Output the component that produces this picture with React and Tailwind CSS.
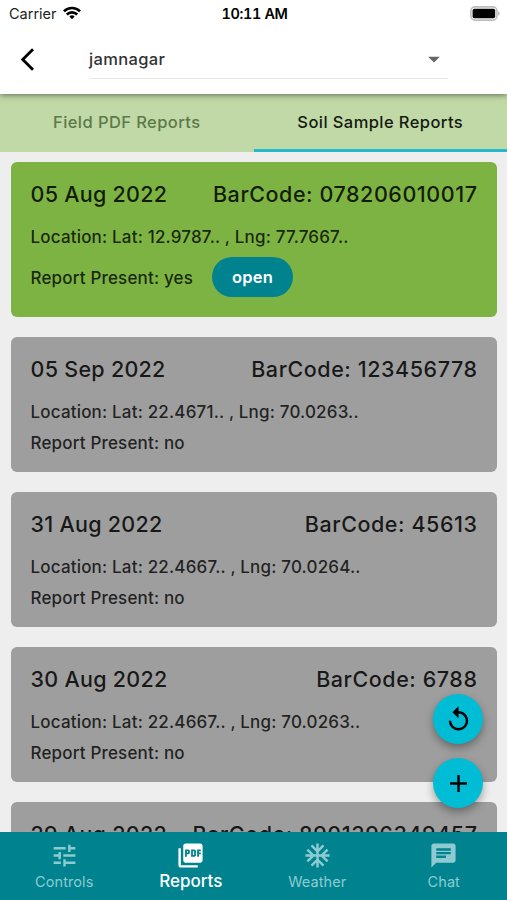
import React, { useState } from 'react';
import {
  MdAcUnit,
  MdAdd,
  MdArrowBackIosNew,
  MdArrowDropDown,
  MdChat,
  MdPictureAsPdf,
  MdReplay,
  MdTune,
} from 'react-icons/md';

const reports = [
  { date: '05 Aug 2022', barcode: '078206010017', lat: '12.9787..', lng: '77.7667..', present: true },
  { date: '05 Sep 2022', barcode: '123456778', lat: '22.4671..', lng: '70.0263..', present: false },
  { date: '31 Aug 2022', barcode: '45613', lat: '22.4667..', lng: '70.0264..', present: false },
  { date: '30 Aug 2022', barcode: '6788', lat: '22.4667..', lng: '70.0263..', present: false },
  { date: '29 Aug 2022', barcode: '8901396349457', lat: '22.4667..', lng: '70.0263..', present: false },
];

const tabs = ['Field PDF Reports', 'Soil Sample Reports'];

const navItems = [
  { label: 'Controls', icon: MdTune },
  { label: 'Reports', icon: MdPictureAsPdf },
  { label: 'Weather', icon: MdAcUnit },
  { label: 'Chat', icon: MdChat },
];

const StatusBar = () => (
  <div className="grid h-7 grid-cols-3 items-center pl-[9px] pr-[7px] text-black">
    <div className="flex items-center gap-1.5 text-[14.5px] text-[#222]">
      <span>Carrier</span>
      <svg className="-mt-0.5" width="18" height="14" viewBox="0 0 19 14" fill="none" stroke="black" strokeWidth="2.7">
        <path d="M1 5.2a12 12 0 0 1 17 0" />
        <path d="M4 8.6a7.8 7.8 0 0 1 11 0" />
        <path d="M9.5 13.6 6.7 10.8a4 4 0 0 1 5.6 0Z" fill="black" stroke="none" />
      </svg>
    </div>
    <span className="text-center text-[14.5px] font-semibold tabular-nums tracking-[-0.4px]">10:11 AM</span>
    <div className="flex justify-end">
      <svg className="-mt-0.5" width="30" height="15" viewBox="0 0 30 15">
        <rect x="0.9" y="0.9" width="26" height="13.2" rx="4" fill="white" stroke="#bdbdbd" strokeWidth="1.6" />
        <rect x="2.6" y="2.8" width="22.6" height="9.4" rx="1.8" fill="black" />
        <path d="M28.2 5.2c1.8.7 1.8 3.9 0 4.6Z" fill="#b5b5b5" />
      </svg>
    </div>
  </div>
);

const ReportCard = ({ report }) => (
  <div
    className={`shrink-0 rounded-[6px] px-5 ${
      report.present ? 'h-[155px] bg-[#7cb342]' : 'h-[135px] bg-[#9e9e9e]'
    }`}
  >
    <div className="flex justify-between pt-[17px] text-[21.5px] font-medium leading-[30px] text-black/85">
      <span className="tracking-[0.28px]">{report.date}</span>
      <span className="-mr-px tracking-[0.55px]">BarCode: {report.barcode}</span>
    </div>
    <p className="mt-4 text-[17px] font-medium leading-6 tracking-[0.18px] text-black/80">
      Location: Lat: {report.lat} , Lng: {report.lng}
    </p>
    <div
      className={`flex items-center text-[17px] font-medium tracking-[0.17px] text-black/80 ${
        report.present ? 'mt-2 h-10' : 'mt-[7px] h-6'
      }`}
    >
      <span className={report.present ? 'w-[181.5px] pt-0.5' : 'pt-px'}>
        Report Present: {report.present ? 'yes' : 'no'}
      </span>
      {report.present && (
        <button className="h-10 w-[81px] rounded-full bg-[#00838f] pt-px text-[16.5px] font-semibold text-white">
          open
        </button>
      )}
    </div>
  </div>
);

const App = () => {
  const [activeTab, setActiveTab] = useState(1);
  const [activeNav, setActiveNav] = useState(1);

  return (
    <div className="relative flex h-[900px] w-[507px] flex-col overflow-hidden bg-[#eeeeee] font-['Inter',sans-serif]">
      {/* Header */}
      <header className="z-10 h-[94px] shrink-0 bg-white shadow-[0_1px_6px_rgba(0,0,0,0.5)]">
        <StatusBar />
        <div className="flex h-[51px] pl-[14px]">
          <button className="flex h-[62px] w-[75px] items-center">
            <MdArrowBackIosNew className="size-[27px] text-black" />
          </button>
          <div className="flex w-[359px] items-center justify-between border-b border-[#e8e8e8] pt-3">
            <span className="pt-px text-[16.5px] font-medium tracking-[0.35px] text-[#333]">jamnagar</span>
            <MdArrowDropDown className="size-7 text-[#666]" />
          </div>
        </div>
      </header>

      {/* Tabs */}
      <div className="flex h-[58px] shrink-0 bg-[#c1d8a7]">
        {tabs.map((tab, i) => (
          <button
            key={tab}
            onClick={() => setActiveTab(i)}
            className={`flex-1 border-b-[3px] pt-px text-[16.5px] font-medium tracking-[0.42px] ${
              activeTab === i ? 'border-[#26b9c6] text-[#141b0e]' : 'border-transparent text-[#5b7a48]'
            }`}
          >
            {tab}
          </button>
        ))}
      </div>

      {/* Report list */}
      <main className="flex min-h-0 flex-1 flex-col gap-5 overflow-hidden px-[10.5px] pt-[10.3px]">
        {reports.map((report) => (
          <ReportCard key={report.barcode} report={report} />
        ))}
      </main>

      {/* Floating buttons */}
      <div className="absolute bottom-[92px] right-6 flex flex-col gap-[14px] text-black">
        <button className="flex size-[50px] items-center justify-center rounded-full bg-[#00bcd4] shadow-[0_4px_8px_rgba(0,0,0,0.35)]">
          <MdReplay className="size-[29px]" />
        </button>
        <button className="flex size-[50px] items-center justify-center rounded-full bg-[#00bcd4] shadow-[0_4px_8px_rgba(0,0,0,0.35)]">
          <MdAdd className="size-[29px]" />
        </button>
      </div>

      {/* Bottom navigation */}
      <nav className="z-10 flex h-[68px] shrink-0 bg-[#00838f] pl-px">
        {navItems.map(({ label, icon: Icon }, i) => (
          <button
            key={label}
            onClick={() => setActiveNav(i)}
            className={`flex flex-1 flex-col items-center pt-[9px] ${
              activeNav === i ? 'text-white' : 'text-[#8ecbd0]'
            }`}
          >
            <Icon className="size-[29px] shrink-0" />
            <span
              className={
                activeNav === i
                  ? 'text-[17px] font-medium leading-[22px]'
                  : 'text-[14.5px] leading-6 tracking-[0.1px]'
              }
            >
              {label}
            </span>
          </button>
        ))}
      </nav>
    </div>
  );
};

export default App;
